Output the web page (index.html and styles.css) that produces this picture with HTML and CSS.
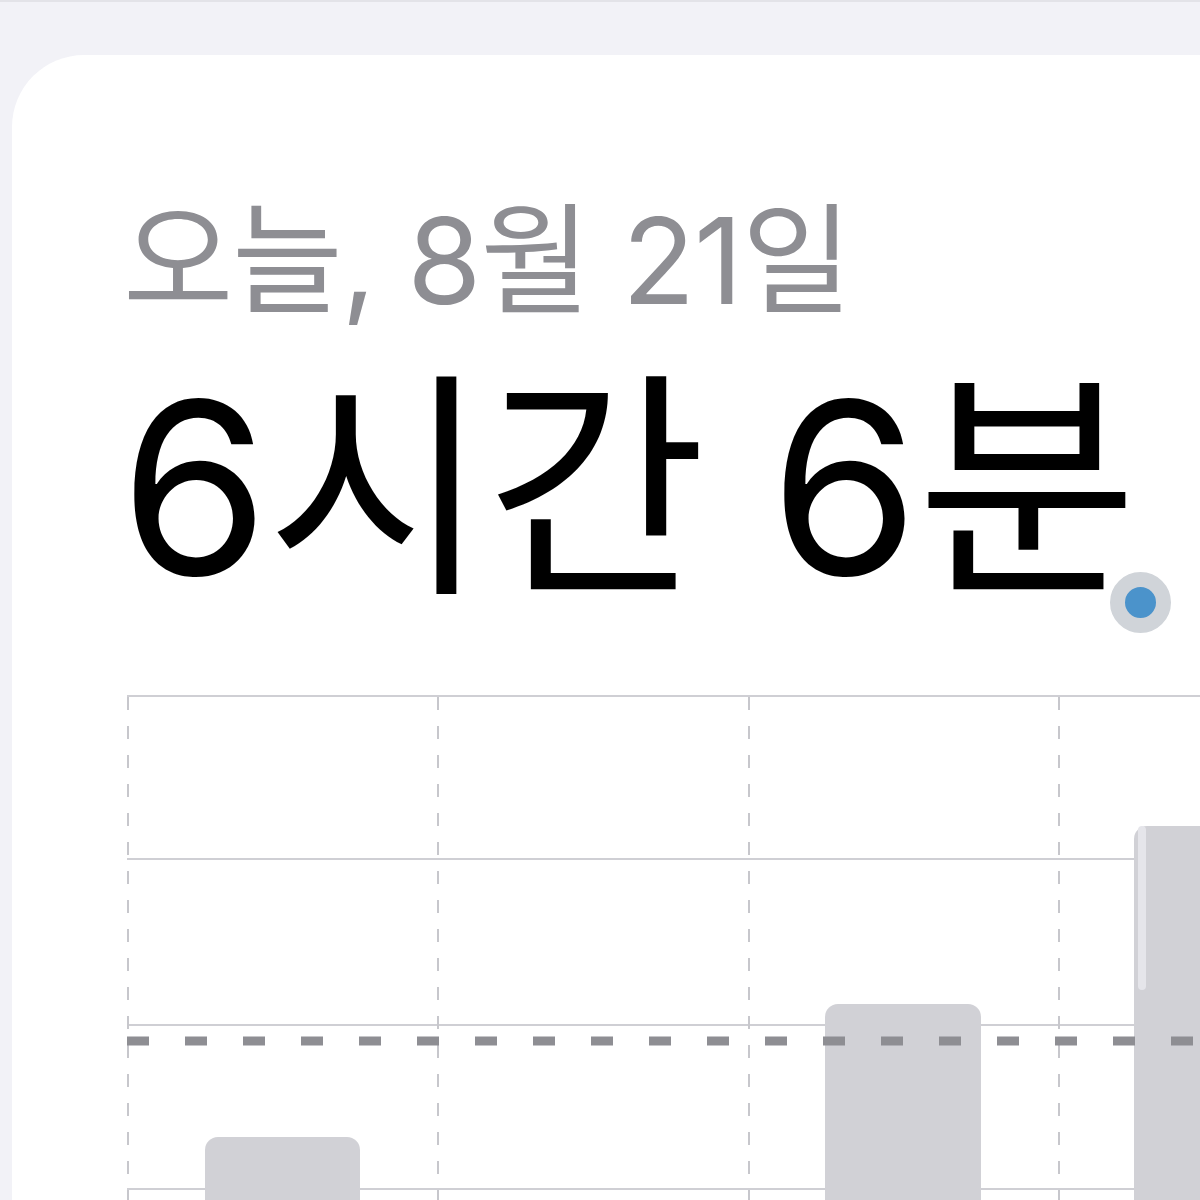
FILE: index.html
```html
<!DOCTYPE html>
<html lang="ko">
<head>
  <meta charset="UTF-8">
  <meta name="viewport" content="width=device-width, initial-scale=1.0">
  <title>스크린 타임</title>
  <link rel="stylesheet" href="styles.css">
</head>
<body>
  <div class="card">
    <p class="date">오늘, 8월 21일</p>
    <h1 class="total">6시간 6분<span class="live-dot"></span></h1>

    <!-- daily usage chart -->
    <div class="chart">
      <svg width="1073" height="505" viewBox="0 0 1073 505">
        <g class="grid-h">
          <line x1="0" y1="1" x2="1073" y2="1"/>
          <line x1="0" y1="164" x2="1073" y2="164"/>
          <line x1="0" y1="330" x2="1073" y2="330"/>
          <line x1="0" y1="494" x2="1073" y2="494"/>
        </g>
        <g class="grid-v">
          <line x1="1" y1="2" x2="1" y2="505"/>
          <line x1="311" y1="2" x2="311" y2="505"/>
          <line x1="622" y1="2" x2="622" y2="505"/>
          <line x1="932" y1="2" x2="932" y2="505"/>
        </g>
        <g class="bars">
          <rect x="78" y="442" width="155" height="120" rx="13"/>
          <rect x="698" y="309" width="156" height="260" rx="13"/>
          <rect x="1007" y="131" width="156" height="420" rx="13"/>
        </g>
        <rect class="scrub" x="1011" y="131" width="8" height="164" rx="4"/>
        <line class="average" x1="0" y1="346" x2="1073" y2="346"/>
      </svg>
    </div>
  </div>
</body>
</html>
```

FILE: styles.css
```css
body {
  margin: 0;
  background: #f2f2f7;
  border-top: 2px solid #e3e3e8;
  font-family: "Inter", "Noto Sans CJK KR", "Noto Sans", sans-serif;
  overflow: hidden;
  height: 1198px;
}
.card {
  margin: 53px 0 0 12px;
  background: #fff;
  border-top-left-radius: 72px;
  padding: 146px 0 0 111px;
  height: 1200px;
}
.date {
  margin: 0;
  font-size: 120px;
  line-height: 1;
  font-weight: 400;
  color: #8e8e93;
  letter-spacing: -1.2px;
  white-space: nowrap;
}
.total {
  margin: 47px 0 0 -3px;
  font-size: 240px;
  line-height: 1;
  font-weight: 400;
  color: #000;
  letter-spacing: -2px;
  white-space: nowrap;
}
.live-dot {
  display: inline-block;
  width: 31px;
  height: 31px;
  border-radius: 50%;
  background: #4b93cb;
  border: 15px solid #d0d4d9;
  vertical-align: -58px;
  margin-left: -26px;
}
.chart {
  margin-top: 62px;
  margin-left: 4px;
}
.chart svg {
  display: block;
  overflow: visible;
}
.grid-h line {
  stroke: #cfcfd4;
  stroke-width: 2;
}
.grid-v line {
  stroke: #c7c7cc;
  stroke-width: 2;
  stroke-dasharray: 13 16;
}
.bars rect {
  fill: #d1d1d6;
}
.scrub {
  fill: #e5e5ea;
}
.average {
  stroke: #8e8e93;
  stroke-width: 9;
  stroke-dasharray: 22 36;
}
```
